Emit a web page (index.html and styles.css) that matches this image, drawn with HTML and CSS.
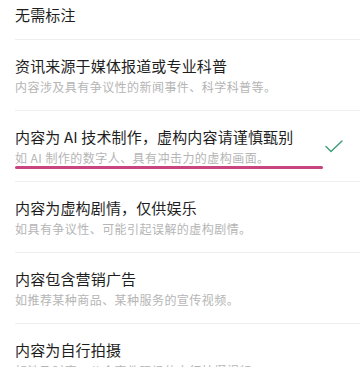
FILE: index.html
```html
<!DOCTYPE html>
<html lang="zh-CN">
<head>
<meta charset="utf-8">
<link rel="stylesheet" href="styles.css">
</head>
<body>
<div class="list">
  <div class="row row-first">
    <div class="text">
      <div class="title">无需标注</div>
    </div>
  </div>
  <div class="row">
    <div class="text">
      <div class="title">资讯来源于媒体报道或专业科普</div>
      <div class="sub">内容涉及具有争议性的新闻事件、科学科普等。</div>
    </div>
  </div>
  <div class="row selected">
    <div class="text">
      <div class="title">内容为 AI 技术制作，虚构内容请谨慎甄别</div>
      <div class="sub">如 AI 制作的数字人、具有冲击力的虚构画面。</div>
    </div>
    <svg class="check" width="18" height="13" viewBox="0 0 18 13">
      <path d="M1 6.5 L6 11.5 L17 1" fill="none" stroke="#3d9c75" stroke-width="1.4" stroke-linecap="round" stroke-linejoin="round"/>
    </svg>
    <div class="mark"></div>
  </div>
  <div class="row">
    <div class="text">
      <div class="title">内容为虚构剧情，仅供娱乐</div>
      <div class="sub">如具有争议性、可能引起误解的虚构剧情。</div>
    </div>
  </div>
  <div class="row">
    <div class="text">
      <div class="title">内容包含营销广告</div>
      <div class="sub">如推荐某种商品、某种服务的宣传视频。</div>
    </div>
  </div>
  <div class="row">
    <div class="text">
      <div class="title">内容为自行拍摄</div>
      <div class="sub">如涉及时事、公众事件现场的自行拍摄视频。</div>
    </div>
  </div>
</div>
</body>
</html>
```
FILE: styles.css
```css
html, body {
  margin: 0;
  padding: 0;
  background: #ffffff;
}
body {
  font-family: "Noto Sans CJK SC", "Noto Sans", sans-serif;
  width: 360px;
  height: 367px;
  overflow: hidden;
}
.list {
  display: flex;
  flex-direction: column;
  padding-left: 15px;
}
.row {
  position: relative;
  display: flex;
  align-items: center;
  padding: 16px 17px 15px 0;
  border-bottom: 1px solid #eeeeee;
}
.row-first {
  padding-top: 5px;
  padding-bottom: 14px;
}
.text {
  flex: 1;
  display: flex;
  flex-direction: column;
  gap: 3px;
}
.title {
  font-size: 15px;
  line-height: 20px;
  letter-spacing: 0.15px;
  color: #1e1e1e;
}
.sub {
  font-size: 12px;
  line-height: 16px;
  letter-spacing: 0.45px;
  color: #b5b5b5;
}
.check {
  flex: none;
  display: block;
}
.mark {
  position: absolute;
  left: 0;
  width: 308px;
  bottom: 12px;
  height: 3px;
  border-radius: 2px;
  background: #c9457f;
}
```
